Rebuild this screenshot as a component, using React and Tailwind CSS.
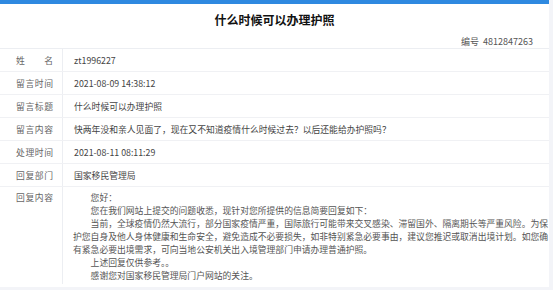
export default function App() {
  const font = { fontFamily: '"Noto Sans CJK SC", "Noto Sans", sans-serif' };
  const rows = [
    ["姓名", "zt1996227"],
    ["留言时间", "2021-08-09 14:38:12"],
    ["留言标题", "什么时候可以办理护照"],
    ["留言内容", "快两年没和亲人见面了，现在又不知道疫情什么时候过去？以后还能给办护照吗？"],
    ["处理时间", "2021-08-11 08:11:29"],
    ["回复部门", "国家移民管理局"],
  ];
  return (
    <div className="w-[553px] h-[290px] bg-[#f3f4f8] overflow-hidden font-['Noto_Sans_CJK_SC',sans-serif]">
      <div className="w-[549px] h-[287px] bg-white border-t-4 border-[#2e89e0] flex flex-col">
        <div className="border-b border-[#eceef2]">
          <div className="h-[31px] flex items-center justify-center text-[12px] font-bold text-[#111] leading-[14px]">
            什么时候可以办理护照
          </div>
          <div className="h-[13px] flex items-center justify-end pr-[16px] text-[9px] text-[#555] leading-[12px]">
            <span>编号</span>
            <span className="ml-[4px]">4812847263</span>
          </div>
        </div>
        {rows.map(([k, v]) => (
          <div key={k} className="h-[23px] flex items-stretch border-b border-[#f0f1f4] text-[8.8px] leading-[13px]">
            <div className="w-[63px] shrink-0 border-r border-[#eceef2] flex items-center pl-[16px]">
              <span className="w-[37px] text-[#666] [text-align:justify] [text-align-last:justify]">{k}</span>
            </div>
            <div className="flex items-center pl-[11px] text-[#444]">{v}</div>
          </div>
        ))}
        <div className="flex-1 flex items-stretch text-[8.8px] leading-[13px]">
          <div className="w-[63px] shrink-0 border-r border-[#eceef2] pl-[16px] pt-[4px] mb-[3px]">
            <span className="block w-[37px] text-[#666] [text-align-last:justify]">回复内容</span>
          </div>
          <div className="w-[476px] ml-[10px] pt-[4px] text-[#555] [line-break:strict]">
            <p className="indent-[2em]">您好：</p>
            <p className="indent-[2em]">您在我们网站上提交的问题收悉，现针对您所提供的信息简要回复如下：</p>
            <p className="indent-[2em]">当前，全球疫情仍然大流行，部分国家疫情严重，国际旅行可能带来交叉感染、滞留国外、隔离期长等严重风险。为保护您自身及他人身体健康和生命安全，避免造成不必要损失，如非特别紧急必要事由，建议您推迟或取消出境计划。如您确有紧急必要出境需求，可向当地公安机关出入境管理部门申请办理普通护照。</p>
            <p className="indent-[2em]">上述回复仅供参考。。</p>
            <p className="indent-[2em]">感谢您对国家移民管理局门户网站的关注。</p>
          </div>
        </div>
      </div>
    </div>
  );
}
